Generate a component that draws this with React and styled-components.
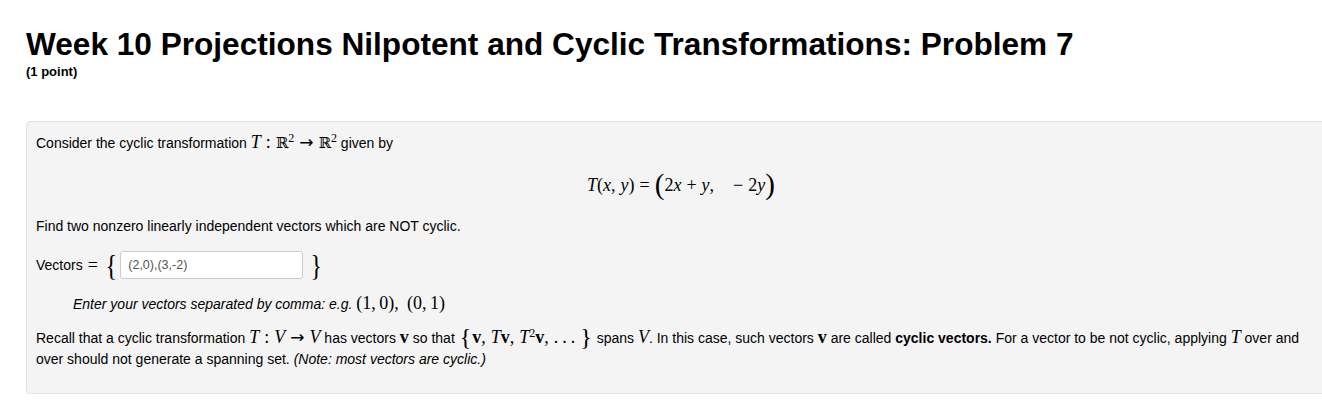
import styled, { createGlobalStyle } from "styled-components";

const GlobalStyle = createGlobalStyle`
  html, body {
    margin: 0;
    padding: 0;
    background: #fff;
    overflow: hidden;
  }
  body {
    font-family: "Liberation Sans", Arial, sans-serif;
    color: #000;
  }
`;

export default function App() {
  return (
    <Page>
      <GlobalStyle />
      <Title>Week 10 Projections Nilpotent and Cyclic Transformations: Problem 7</Title>
      <Points>(1 point)</Points>
      <Panel>
        <Para>
          Consider the cyclic transformation <M>T</M>
          <Op>:</Op>
          <Bb>ℝ</Bb>
          <Sup>2</Sup>
          <Arrow>→</Arrow>
          <Bb>ℝ</Bb>
          <Sup>2</Sup> given by
        </Para>
        <Display>
          <M>T</M>
          <Up>(</Up>
          <M>x</M>
          <Comma>,</Comma>
          <M>y</M>
          <Up>)</Up>
          <Op>=</Op>
          <Big>(</Big>
          <Up>2</Up>
          <M>x</M>
          <Op>+</Op>
          <M>y</M>
          <Comma wide>,</Comma>
          <Op>−</Op>
          <Up>2</Up>
          <M>y</M>
          <Big>)</Big>
        </Display>
        <Para>Find two nonzero linearly independent vectors which are NOT cyclic.</Para>
        <AnswerRow>
          <span>Vectors</span>
          <Op>=</Op>
          <Brace>{"{"}</Brace>
          <Answer type="text" defaultValue="(2,0),(3,-2)" />
          <Brace>{"}"}</Brace>
        </AnswerRow>
        <Hint>
          Enter your vectors separated by comma: e.g.{" "}
          <HintMath>(1,&thinsp;0),&nbsp;&thinsp;(0,&thinsp;1)</HintMath>
        </Hint>
        <Recall>
          Recall that a cyclic transformation <M>T</M>
          <Op>:</Op>
          <M>V</M>
          <Arrow>→</Arrow>
          <M>V</M> has vectors <Vec>v</Vec> so that <Brace small>{"{"}</Brace>
          <Vec>v</Vec>
          <Comma>,</Comma>
          <M>T</M>
          <Vec>v</Vec>
          <Comma>,</Comma>
          <M>T</M>
          <Sup>2</Sup>
          <Vec>v</Vec>
          <Comma>,</Comma>
          <Dots>...</Dots>
          <Brace small>{"}"}</Brace> spans <M>V</M>. In this case, such vectors <Vec>v</Vec> are
          called <strong>cyclic vectors.</strong> For a vector to be not cyclic, applying{" "}
          <M>T</M> over and over should not generate a spanning set.{" "}
          <em>(Note: most vectors are cyclic.)</em>
        </Recall>
      </Panel>
    </Page>
  );
}

const Page = styled.div`
  padding: 26px 0 0 26px;
`;

const Title = styled.h1`
  margin: 0;
  font-size: 31.6px;
  font-weight: 700;
  line-height: 36px;
`;

const Points = styled.div`
  margin-top: 2px;
  font-size: 13px;
  font-weight: 700;
`;

const Panel = styled.div`
  margin-top: 42px;
  width: 1290px;
  padding: 10px 10px 23px 9px;
  background: #f4f4f4;
  border: 1px solid #e3e3e3;
  border-radius: 4px;
  font-size: 14px;
  line-height: 21px;
`;

const Para = styled.p`
  margin: 0 0 12px;
`;

const M = styled.span`
  font-family: "Liberation Serif", "DejaVu Serif", serif;
  font-style: italic;
  font-size: 18px;
`;

const Up = styled.span`
  font-family: "Liberation Serif", "DejaVu Serif", serif;
  font-size: 18px;
`;

const Op = styled(Up)`
  margin: 0 5px;
`;

const Comma = styled(Up)`
  margin-right: ${(p) => (p.wide ? "14px" : "5px")};
`;

const Dots = styled(Up)`
  letter-spacing: 4px;
`;

const Arrow = styled.span`
  font-family: "DejaVu Sans", sans-serif;
  font-size: 17px;
  margin: 0 5px;
`;

const Bb = styled.span`
  font-family: "DejaVu Serif", serif;
  font-size: 15px;
`;

const Sup = styled.sup`
  font-family: "Liberation Serif", "DejaVu Serif", serif;
  font-size: 12px;
  line-height: 0;
`;

const Vec = styled.span`
  font-family: "Liberation Serif", "DejaVu Serif", serif;
  font-weight: 700;
  font-size: 18px;
`;

const Big = styled(Up)`
  font-size: 29px;
  vertical-align: -3px;
  line-height: 0;
`;

const Display = styled.div`
  text-align: center;
  margin: 19px 0 18px;
  line-height: 24px;
`;

const AnswerRow = styled.div`
  display: flex;
  align-items: center;
  margin: 12px 0 12px;
`;

const Brace = styled.span`
  font-family: "Liberation Serif", "DejaVu Serif", serif;
  font-size: ${(p) => (p.small ? "24px" : "30px")};
  line-height: ${(p) => (p.small ? "0" : "32px")};
  vertical-align: ${(p) => (p.small ? "-2px" : "baseline")};
  transform: ${(p) => (p.small ? "none" : "scaleX(0.8)")};
  display: inline-block;
  margin: 0 1px;
`;

const Answer = styled.input`
  width: 183px;
  height: 28px;
  box-sizing: border-box;
  border: 1px solid #cccccc;
  border-radius: 3px;
  background: #fff;
  padding: 0 7px;
  font-family: "Liberation Sans", Arial, sans-serif;
  font-size: 12.5px;
  color: #555;
  margin: 0 5px 0 1px;
`;

const Hint = styled.p`
  margin: 0 0 12px 37px;
  font-style: italic;
`;

const HintMath = styled.span`
  font-family: "Liberation Serif", "DejaVu Serif", serif;
  font-style: normal;
  font-size: 18px;
`;

const Recall = styled.p`
  margin: 0;
`;
